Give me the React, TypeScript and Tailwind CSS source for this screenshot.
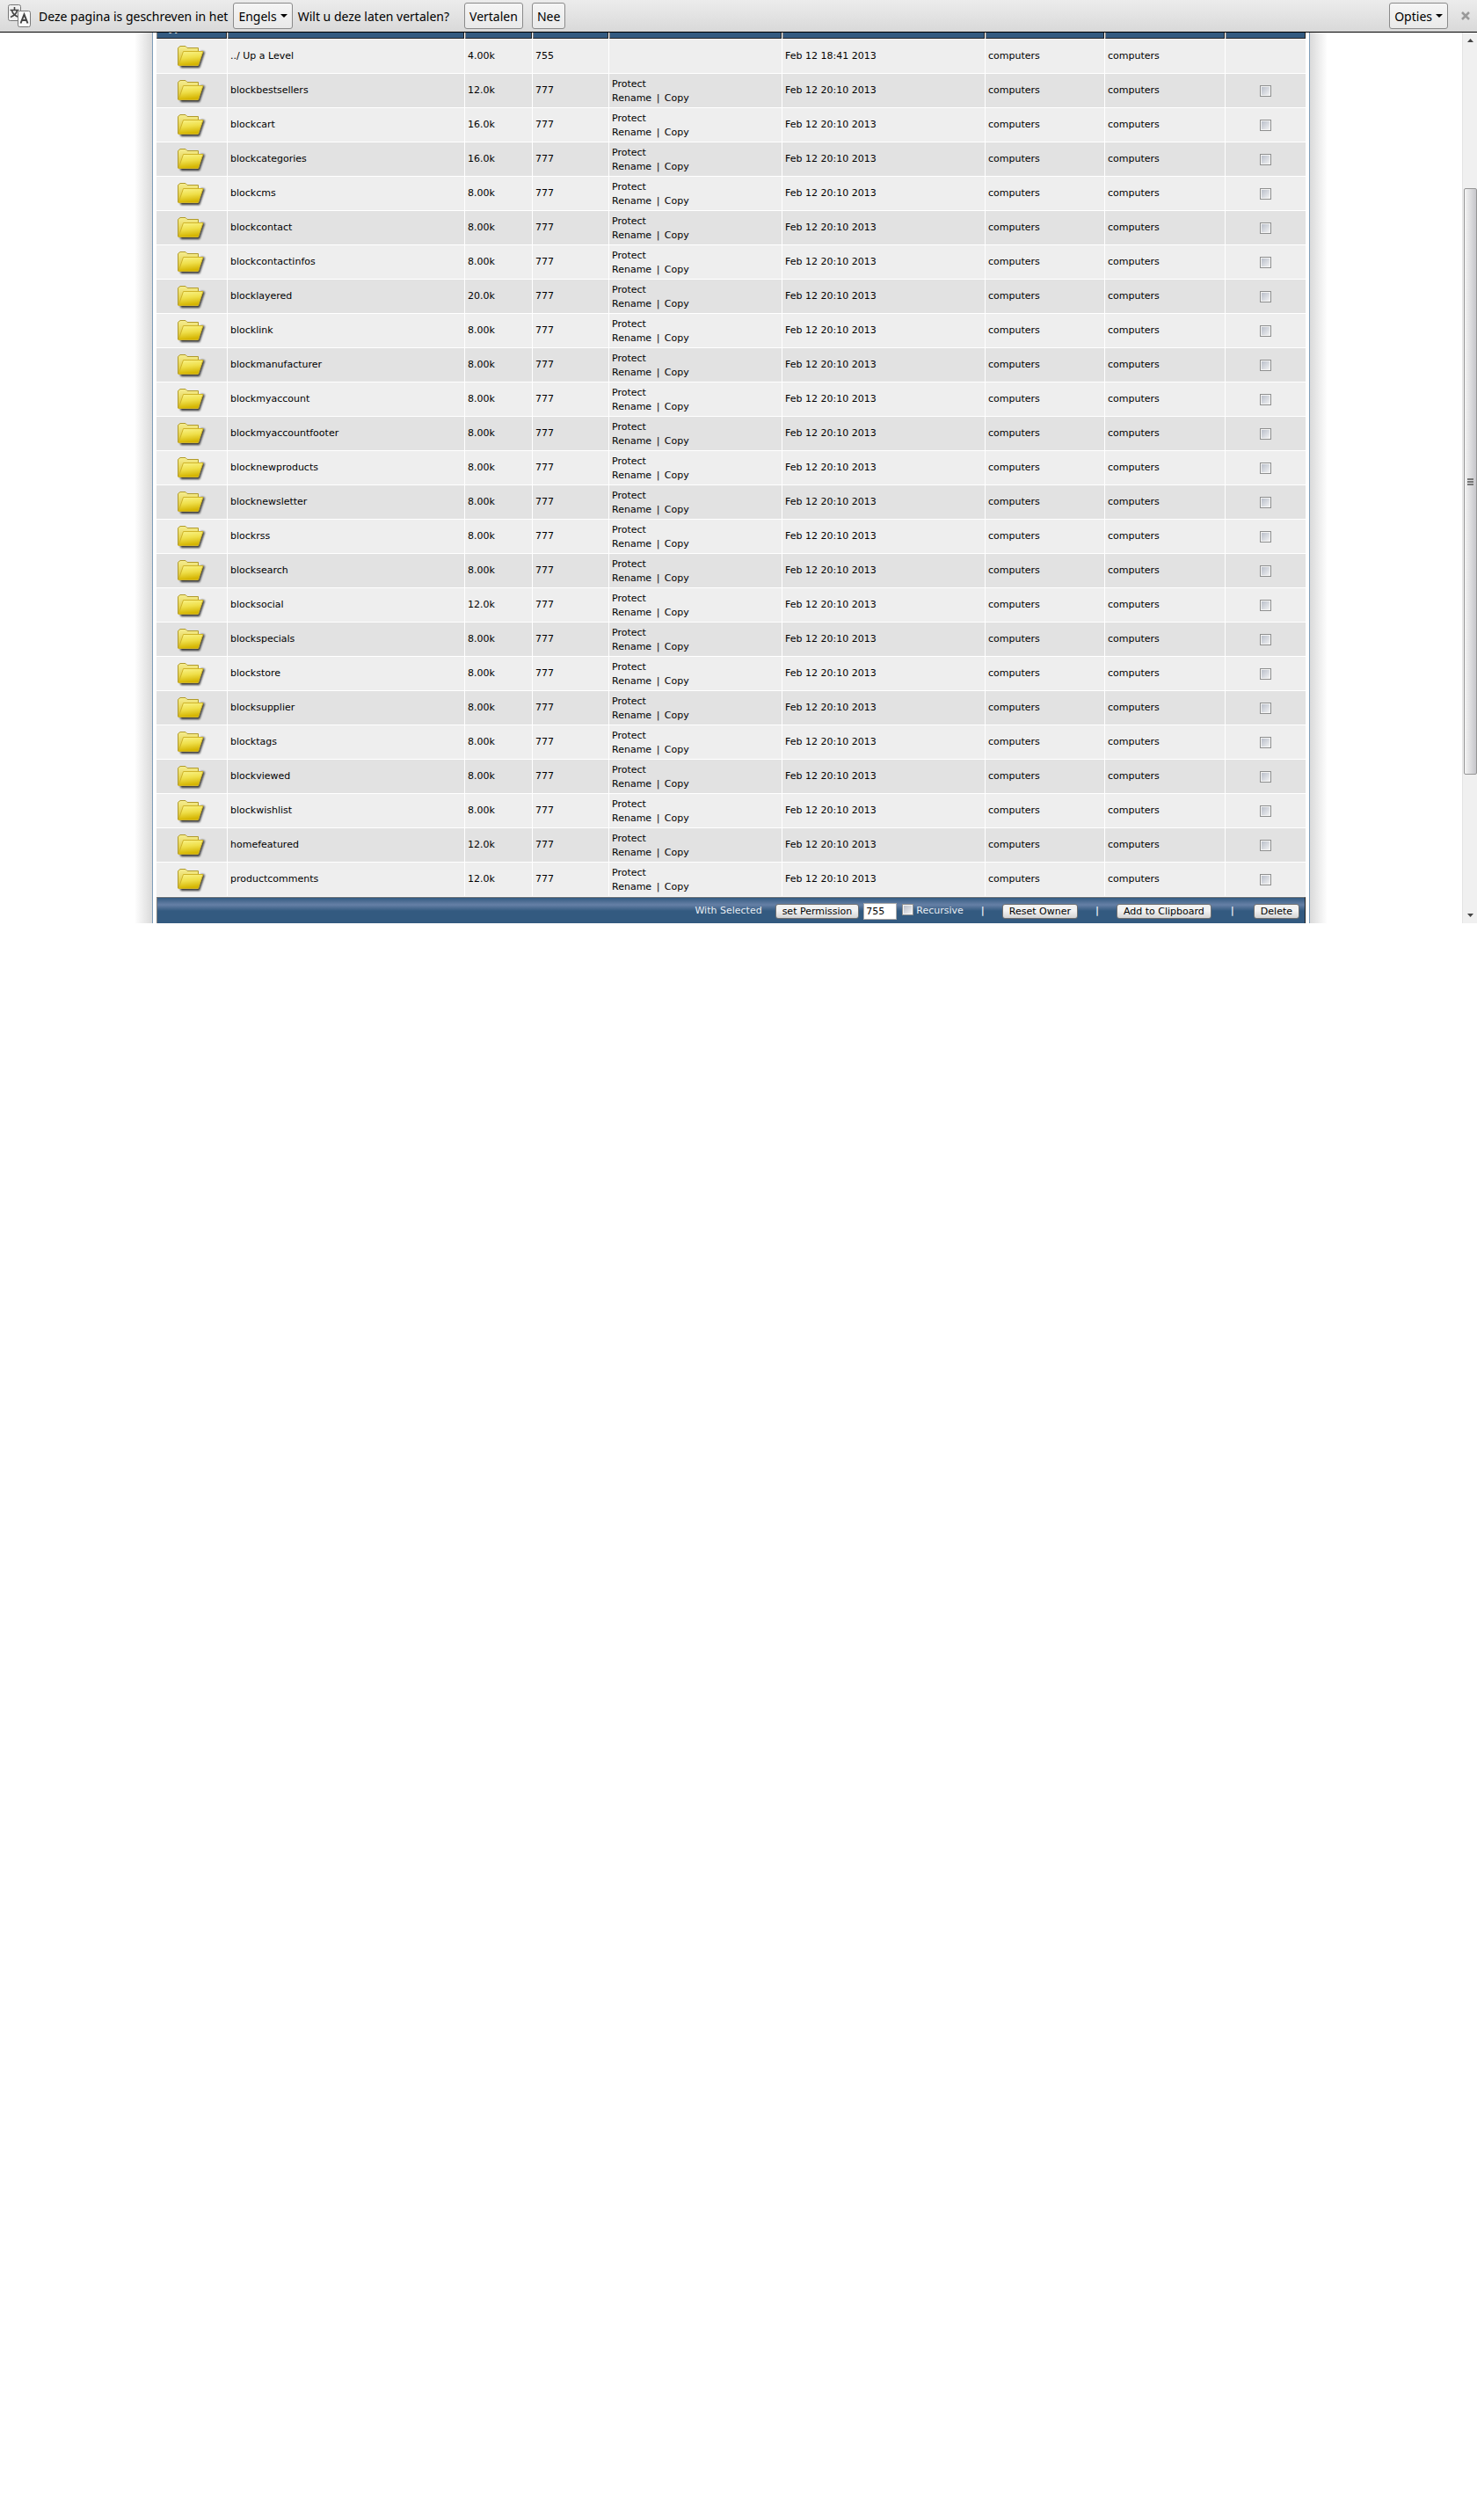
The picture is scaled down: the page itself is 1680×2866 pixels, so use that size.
import type { ReactNode } from "react";

const rows: [string, string, string][] = [
  ["blockbestsellers", "12.0k", "777"],
  ["blockcart", "16.0k", "777"],
  ["blockcategories", "16.0k", "777"],
  ["blockcms", "8.00k", "777"],
  ["blockcontact", "8.00k", "777"],
  ["blockcontactinfos", "8.00k", "777"],
  ["blocklayered", "20.0k", "777"],
  ["blocklink", "8.00k", "777"],
  ["blockmanufacturer", "8.00k", "777"],
  ["blockmyaccount", "8.00k", "777"],
  ["blockmyaccountfooter", "8.00k", "777"],
  ["blocknewproducts", "8.00k", "777"],
  ["blocknewsletter", "8.00k", "777"],
  ["blockrss", "8.00k", "777"],
  ["blocksearch", "8.00k", "777"],
  ["blocksocial", "12.0k", "777"],
  ["blockspecials", "8.00k", "777"],
  ["blockstore", "8.00k", "777"],
  ["blocksupplier", "8.00k", "777"],
  ["blocktags", "8.00k", "777"],
  ["blockviewed", "8.00k", "777"],
  ["blockwishlist", "8.00k", "777"],
  ["homefeatured", "12.0k", "777"],
  ["productcomments", "12.0k", "777"],
];

function Folder() {
  return (
    <svg width="34" height="29" viewBox="1 0 34 29" className="mx-auto block" aria-label="Folder" role="img">
      <defs>
        <linearGradient id="front" x1="0" y1="0" x2="0.2" y2="1">
          <stop offset="0" stopColor="#faf48c" />
          <stop offset="0.5" stopColor="#efdf4a" />
          <stop offset="1" stopColor="#d4b400" />
        </linearGradient>
        <linearGradient id="back" x1="0" y1="0" x2="0" y2="1">
          <stop offset="0" stopColor="#f6ee92" />
          <stop offset="1" stopColor="#d8be28" />
        </linearGradient>
        <filter id="soft" x="-20%" y="-20%" width="140%" height="140%">
          <feGaussianBlur stdDeviation="0.900" />
        </filter>
      </defs>
      <path d="M4 23 L6 27 H27 L33 9 L29 8 L25 24 Z" fill="#111" opacity="0.85" filter="url(#soft)" />
      <path d="M2.500 24 V4.500 L5 2.500 H11 L13 4.500 H25.500 V9 L22 24 Z" fill="url(#back)" stroke="#b09a2c" strokeWidth="1" />
      <path d="M3 24.500 L8.500 8.500 H31 L25.500 24.500 Z" fill="url(#front)" stroke="#d0b428" strokeWidth="1" />
    </svg>
  );
}

function TranslateIcon() {
  return (
    <svg width="28" height="28" viewBox="0 0 28 28" className="shrink-0" aria-hidden="true">
      <rect x="1.500" y="1.500" width="14" height="18" rx="2" fill="#f0f0f0" stroke="#777" />
      <path d="M8.500 4 V7 M3.500 7.500 H13.500 M5.500 8 C6.500 12 9.500 14 13 15.500 M11.500 8 C10.500 12 7.500 14 4 15.500" stroke="#444" strokeWidth="1.600" fill="none" />
      <rect x="12.500" y="8.500" width="14" height="18" rx="2" fill="#fafafa" stroke="#777" />
      <path d="M15.500 22.500 L19.500 12.500 L23.500 22.500 M17 19 H22" stroke="#444" strokeWidth="2" fill="none" />
    </svg>
  );
}

function BarButton({ children, caret, className = "" }: { children: ReactNode; caret?: boolean; className?: string }) {
  return (
    <button
      type="button"
      className={
        "flex h-[30px] items-center gap-1 rounded-[3px] border border-[#8a8a8a] bg-linear-to-b from-[#f5f5f5] to-[#e9e9e9] px-[5px] " +
        className
      }
    >
      {children}
      {caret && (
        <svg width="8" height="4" viewBox="0 0 8 4" aria-hidden="true">
          <path d="M0 0 H8 L4 4 Z" fill="#000" />
        </svg>
      )}
    </button>
  );
}

function Tick({ label, className = "" }: { label: string; className?: string }) {
  return (
    <input
      type="checkbox"
      aria-label={label}
      className={
        "size-[13px] shrink-0 appearance-none border border-[#8e8f8f] bg-linear-to-br from-[#b4bac6] to-[#f6f6f6] shadow-[inset_0_0_0_1px_#f4f4f4] " +
        className
      }
    />
  );
}

function FormButton({ children }: { children: ReactNode }) {
  return (
    <button
      type="button"
      className="h-[17px] rounded-[3px] border border-[#707070] bg-linear-to-b from-[#f2f2f2] from-45% to-[#d4d4d4] px-[7px] leading-[15px] text-black"
    >
      {children}
    </button>
  );
}

const heads = ["Type", "", "", "", "", "", "", "", ""];

function FileTable() {
  return (
    <table className="w-full table-fixed border-separate border-spacing-0 text-left">
      <colgroup>
        <col className="w-[81px]" />
        <col className="w-[270px]" />
        <col className="w-[77px]" />
        <col className="w-[87px]" />
        <col className="w-[197px]" />
        <col className="w-[231px]" />
        <col className="w-[136px]" />
        <col className="w-[137px]" />
        <col />
      </colgroup>
      <thead>
        <tr>
          {heads.map((h, i) => (
            <th key={i} className="border-r border-b border-white p-0 font-bold text-white last:border-r-0">
              <div className="flex h-[7px] items-end overflow-hidden border-r border-b border-l border-r-[#222] border-b-[#222] border-l-[#808080] bg-[#335a80] pb-1 pl-[6px]">
                <span className="leading-3">{h}</span>
              </div>
            </th>
          ))}
        </tr>
      </thead>
      <tbody className="[&_td]:border-r [&_td]:border-b [&_td]:border-white [&_td]:px-[3px] [&_td]:pt-px [&_td]:pb-0 [&_td:last-child]:border-r-0">
        <tr className="h-[39px] bg-[#eeeeee]">
          <td><Folder /></td>
          <td><a href="#up">../ Up a Level</a></td>
          <td>4.00k</td>
          <td>755</td>
          <td />
          <td>Feb 12 18:41 2013</td>
          <td>computers</td>
          <td>computers</td>
          <td />
        </tr>
        {rows.map(([name, size, perms]) => (
          <tr key={name} className="h-[39px] odd:bg-[#eeeeee] even:bg-[#e2e2e2]">
            <td><Folder /></td>
            <td><a href={"#" + name}>{name}</a></td>
            <td>{size}</td>
            <td>{perms}</td>
            <td className="leading-4">
              <a href="#protect">Protect</a>
              <br />
              <a href="#rename">Rename</a> <span className="px-[2px]">|</span> <a href="#copy">Copy</a>
            </td>
            <td>Feb 12 20:10 2013</td>
            <td>computers</td>
            <td>computers</td>
            <td><Tick label={"Select " + name} className="mx-auto block" /></td>
          </tr>
        ))}
      </tbody>
    </table>
  );
}

function ActionBar() {
  return (
    <div className="flex h-[30px] items-center justify-end border-t border-r border-l border-t-[#808080] border-r-[#222] border-l-[#808080] bg-[linear-gradient(#335a80_0,#6680a6_8px,#335a80_15px)] pt-[2px] pr-[6px] text-[#e8eef4]">
      <span className="mr-[15px]">With Selected</span>
      <FormButton>set Permission</FormButton>
      <input
        aria-label="Permission"
        defaultValue="755"
        className="ml-[5px] h-[19px] w-[38px] border border-[#aaa] bg-white px-[2px] text-black"
      />
      <label className="ml-[6px] flex items-center gap-[3px]">
        <Tick label="Recursive" className="mb-1" />
        Recursive
      </label>
      <b className="w-11 text-center">|</b>
      <FormButton>Reset Owner</FormButton>
      <b className="w-11 text-center">|</b>
      <FormButton>Add to Clipboard</FormButton>
      <b className="w-12 text-center">|</b>
      <FormButton>Delete</FormButton>
    </div>
  );
}

function ScrollBar() {
  return (
    <div className="flex w-[17px] shrink-0 flex-col items-center border-l border-[#e4e4e4] bg-[#f0f0f0] py-[7px]" aria-hidden="true">
      <svg width="7" height="4" viewBox="0 0 7 4"><path d="M0 4 L3.500 0 L7 4 Z" fill="#444" /></svg>
      <div className="h-[166px]" />
      <div className="flex w-[15px] flex-1 flex-col items-center justify-center gap-px rounded-[2px] border border-[#959595] bg-linear-to-r from-[#f4f4f4] to-[#c6c6ca]">
        <span className="h-[2px] w-[7px] bg-[#777]" />
        <span className="h-[2px] w-[7px] bg-[#777]" />
        <span className="h-[2px] w-[7px] bg-[#777]" />
      </div>
      <div className="h-[158px]" />
      <svg width="7" height="4" viewBox="0 0 7 4"><path d="M0 0 L3.500 4 L7 0 Z" fill="#444" /></svg>
    </div>
  );
}

export default function App() {
  return (
    <div className="min-h-screen bg-white text-black">
      <header className="flex h-[37px] items-center border-b border-black bg-linear-to-b from-[#ececec] to-[#d9d9d9] pr-2 pl-2 font-['Noto_Sans',sans-serif] text-[14px]">
        <TranslateIcon />
        <span className="ml-2">Deze pagina is geschreven in het</span>
        <BarButton caret className="ml-[6px]">Engels</BarButton>
        <span className="ml-[6px]">Wilt u deze laten vertalen?</span>
        <BarButton className="ml-[17px]">Vertalen</BarButton>
        <BarButton className="ml-[10px]">Nee</BarButton>
        <BarButton caret className="ml-auto">Opties</BarButton>
        <button type="button" aria-label="Sluiten" className="ml-[15px]">
          <svg width="10" height="10" viewBox="0 0 10 10"><path d="M1 1 L9 9 M9 1 L1 9" stroke="#999" strokeWidth="2.500" /></svg>
        </button>
      </header>
      <div className="flex">
        <main className="flex min-w-0 flex-1 justify-center font-['DejaVu_Sans',Verdana,sans-serif] text-[11px]">
          <div className="w-5 bg-linear-to-l from-[#dadada] to-white" />
          <div className="w-full max-w-[1317px] border-x border-[#7f9db9] px-1">
            <FileTable />
            <ActionBar />
          </div>
          <div className="w-5 bg-linear-to-r from-[#dadada] to-white" />
        </main>
        <ScrollBar />
      </div>
    </div>
  );
}
